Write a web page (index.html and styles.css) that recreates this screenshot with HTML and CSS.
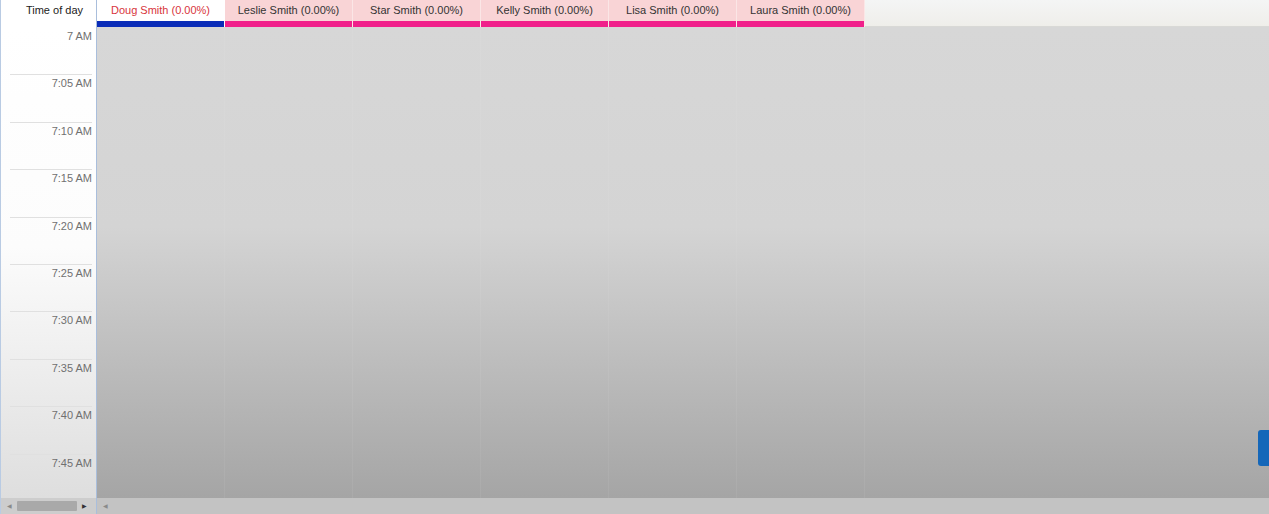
FILE: index.html
```html
<!DOCTYPE html>
<html>
<head>
<meta charset="utf-8">
<link rel="stylesheet" href="styles.css">
</head>
<body>
<div class="app">
  <div class="corner">Time of day</div>
  <div class="heads">
    <div class="head active"><span class="name">Doug Smith (0.00%)</span><span class="bar"></span></div>
    <div class="head"><span class="name">Leslie Smith (0.00%)</span><span class="bar"></span></div>
    <div class="head"><span class="name">Star Smith (0.00%)</span><span class="bar"></span></div>
    <div class="head"><span class="name">Kelly Smith (0.00%)</span><span class="bar"></span></div>
    <div class="head"><span class="name">Lisa Smith (0.00%)</span><span class="bar"></span></div>
    <div class="head"><span class="name">Laura Smith (0.00%)</span><span class="bar"></span></div>
    <div class="head-fill"></div>
  </div>
  <div class="times">
    <div class="slot first"><span>7 AM</span></div>
    <div class="slot"><span>7:05 AM</span></div>
    <div class="slot"><span>7:10 AM</span></div>
    <div class="slot"><span>7:15 AM</span></div>
    <div class="slot"><span>7:20 AM</span></div>
    <div class="slot"><span>7:25 AM</span></div>
    <div class="slot"><span>7:30 AM</span></div>
    <div class="slot"><span>7:35 AM</span></div>
    <div class="slot"><span>7:40 AM</span></div>
    <div class="slot"><span>7:45 AM</span></div>
  </div>
  <div class="canvas">
    <div class="col"></div><div class="col"></div><div class="col"></div>
    <div class="col"></div><div class="col"></div><div class="col"></div>
    <div class="side-tab"></div>
  </div>
  <div class="hs-left">
    <span class="arr">&#9664;</span>
    <span class="thumb"></span>
    <span class="arr dark">&#9654;</span>
  </div>
  <div class="hs-right">
    <span class="arr">&#9664;</span>
  </div>
</div>
</body>
</html>
```
FILE: styles.css
```css
html, body {
  margin: 0;
  padding: 0;
  overflow: hidden;
}
body {
  width: 1269px;
  height: 514px;
  font-family: "Liberation Sans", Arial, sans-serif;
  font-size: 11px;
  color: #333;
  background: #d6d6d6;
}
.app {
  display: grid;
  grid-template-columns: 97px 1fr;
  grid-template-rows: 27px 471px 16px;
  width: 1269px;
  height: 514px;
}
.corner {
  background: #fff;
  border-left: 1px solid #b9cbe3;
  border-right: 1px solid #a9bedc;
  display: flex;
  justify-content: flex-end;
  padding: 4px 13px 0 0;
  box-sizing: border-box;
  color: #222;
}
.heads {
  display: flex;
}
.head {
  width: 128px;
  flex: none;
  box-sizing: border-box;
  display: flex;
  flex-direction: column;
  background: #f9d4d6;
  border-right: 1px solid #fbe6e6;
}
.head .name {
  height: 21px;
  line-height: 21px;
  text-align: center;
  white-space: nowrap;
  color: #333;
}
.head .bar {
  height: 6px;
  background: #f0208b;
}
.head.active {
  background: #fff;
  border-right-color: #fff;
}
.head.active .name { color: #d8353c; }
.head.active .bar { background: #0a2cb8; }
.head-fill {
  flex: 1;
  background: linear-gradient(#f4f5f5, #efeeea);
  border-bottom: 1px solid #d9d9d6;
}

.times {
  background: linear-gradient(#ffffff 0, #fcfcfc 220px, #dedede 100%);
  border-left: 1px solid #b9cbe3;
  border-right: 1px solid #a9bedc;
  overflow: hidden;
}
.slot {
  height: 47.4px;
  box-sizing: border-box;
  border-top: 1px solid #e0e0e0;
  margin-left: 9px;
  margin-right: 4px;
  text-align: right;
  padding-top: 2px;
  color: #707070;
}
.slot.first {
  border-top-color: transparent;
}

.canvas {
  position: relative;
  display: flex;
  background: linear-gradient(#d7d7d7 0, #d4d4d4 200px, #a5a5a5 100%);
  overflow: hidden;
}
.col {
  width: 128px;
  flex: none;
  box-sizing: border-box;
  border-right: 1px solid rgba(255, 255, 255, 0.06);
}
.side-tab {
  position: absolute;
  right: 0;
  top: 403px;
  width: 11px;
  height: 36px;
  background: #1567b9;
  border-radius: 3px 0 0 3px;
}

.hs-left {
  background: #cdcdcd;
  border-left: 1px solid #b9cbe3;
  border-right: 1px solid #a9bedc;
  display: flex;
  align-items: center;
  padding: 0 4px 0 6px;
  gap: 5px;
}
.hs-right {
  background: #c3c3c3;
  display: flex;
  align-items: center;
  padding-left: 6px;
}
.arr {
  font-size: 6px;
  color: #8a8a8a;
  line-height: 1;
}
.arr.dark { color: #333; }
.thumb {
  width: 60px;
  height: 10px;
  background: #a9a9a9;
  border-radius: 1px;
}
```
